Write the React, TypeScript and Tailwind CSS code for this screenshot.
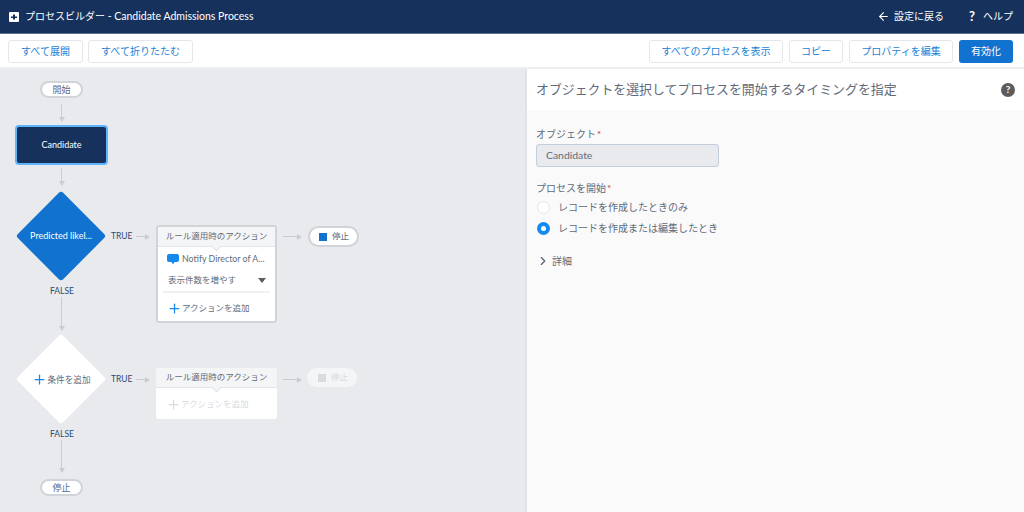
import { ArrowLeft, ChevronRight, Plus } from "lucide-react";

const font = "[font-family:Lato,'Noto_Sans_CJK_JP',sans-serif]";

function ArrowDown({ className }: { className: string }) {
  return (
    <div className={`absolute flex w-[9px] flex-col items-center ${className}`}>
      <div className="w-[1.5px] flex-1 bg-[#c9ccd1]" />
      <div className="h-0 w-0 border-x-[3.5px] border-t-[5px] border-x-transparent border-t-[#c9ccd1]" />
    </div>
  );
}

function ArrowRight({ className }: { className: string }) {
  return (
    <div className={`absolute flex h-[9px] items-center ${className}`}>
      <div className="h-[1.5px] flex-1 bg-[#c9ccd1]" />
      <div className="h-0 w-0 border-y-[3.5px] border-l-[5px] border-y-transparent border-l-[#c9ccd1]" />
    </div>
  );
}

function Pill({ label, className }: { label: string; className: string }) {
  return (
    <div className={`absolute flex h-[17px] w-[43px] items-center justify-center rounded-full border-2 border-[#d0d3d8] bg-white text-[9px] text-[#54698d] ${className}`}>
      {label}
    </div>
  );
}

function BranchLabel({ label, className }: { label: string; className: string }) {
  return <div className={`absolute text-[8.5px] leading-[12px] text-[#2a4a75] ${className}`}>{label}</div>;
}

function ToolbarButton({ label, width }: { label: string; width: string }) {
  return (
    <button className={`h-[23px] rounded-[3px] border border-[#e4e6e9] bg-white text-[10px] text-[#1b7fd6] ${width}`}>
      {label}
    </button>
  );
}

function CardHeader() {
  return (
    <div className="relative flex h-[20px] items-center justify-center whitespace-nowrap border-b border-[#e3e5e8] bg-[#f4f5f6] text-[8.5px] text-[#5f6b7a]">
      ルール適用時のアクション
      <div className="absolute -bottom-[4px] left-1/2 -ml-[3.5px] h-[7px] w-[7px] rotate-45 border-b border-r border-[#e3e5e8] bg-[#f4f5f6]" />
    </div>
  );
}

function Canvas() {
  return (
    <div className={`relative flex-1 bg-[#e8eaed] ${font}`}>
      <Pill label="開始" className="left-[40px] top-[12px]" />
      <ArrowDown className="left-[57px] top-[35px] h-[18px]" />

      <div className="absolute left-[15px] top-[56px] flex h-[40px] w-[93px] items-center justify-center rounded-[4px] border-2 border-[#5eb4ff] bg-[#16325c] text-[9px] text-white">
        <span>Candidate</span>
      </div>
      <ArrowDown className="left-[57px] top-[99px] h-[18px]" />

      {/* first decision */}
      <div className="absolute left-[29px] top-[135px] h-[64px] w-[64px] rotate-45 rounded-[3px] bg-[#1172d0]" />
      <div className="absolute left-[16px] top-[160px] w-[90px] text-center text-[9px] leading-[14px] text-white">Predicted likel...</div>
      <BranchLabel label="TRUE" className="left-[111px] top-[161px]" />
      <ArrowRight className="left-[136px] top-[163px] w-[14px]" />

      <div className="absolute left-[156px] top-[156px] h-[98px] w-[121px] rounded-[3px] border-2 border-[#d0d3d8] bg-white">
        <CardHeader />
        <div className="flex h-[22px] items-center pl-[9px] pt-[2px] text-[8.8px] text-[#5f6b7a]">
          <svg viewBox="0 0 12 12" className="mr-[3px] h-[12px] w-[12px] shrink-0">
            <path d="M2 1h8a2 2 0 0 1 2 2v4a2 2 0 0 1-2 2H7.5L6 11.5 4.5 9H2a2 2 0 0 1-2-2V3a2 2 0 0 1 2-2z" fill="#1589ee" />
          </svg>
          <span className="whitespace-nowrap">Notify Director of A...</span>
        </div>
        <div className="mx-[5px] flex h-[24px] items-center justify-between border-b-2 border-[#f0f1f2] pt-[1px] pl-[5px] pr-[4px] text-[8.5px] text-[#5f6b7a]">
          表示件数を増やす
          <div className="h-0 w-0 border-x-[4px] border-t-[5px] border-x-transparent border-t-[#5c5c5c]" />
        </div>
        <div className="flex h-[28px] items-center pl-[9px] pt-[3px] text-[8.5px] text-[#5f6b7a]">
          <Plus size={15} strokeWidth={2} className="text-[#1589ee]" />
          アクションを追加
        </div>
      </div>
      <ArrowRight className="left-[283px] top-[163px] w-[19px]" />
      <div className="absolute left-[308px] top-[157px] flex h-[21px] w-[51px] items-center rounded-full border-2 border-[#d0d3d8] bg-white pl-[9px] text-[8.5px] text-[#5f6b7a]">
        <div className="mr-[5px] h-[8px] w-[8px] bg-[#1172d0]" />
        停止
      </div>

      <BranchLabel label="FALSE" className="left-[50px] top-[216px]" />
      <ArrowDown className="left-[57px] top-[228px] h-[34px]" />

      {/* second decision */}
      <div className="absolute left-[29px] top-[278px] h-[64px] w-[64px] rotate-45 rounded-[3px] bg-white" />
      <div className="absolute left-[16px] top-[303px] flex w-[90px] items-center justify-center text-[8.6px] leading-[14px] text-[#5f6b7a]">
        <Plus size={15} strokeWidth={2} className="mr-[1px] text-[#1589ee]" />
        条件を追加
      </div>
      <BranchLabel label="TRUE" className="left-[111px] top-[304px]" />
      <ArrowRight className="left-[136px] top-[306px] w-[14px]" />

      <div className="absolute left-[156px] top-[299px] h-[51px] w-[121px] rounded-[3px] bg-white">
        <CardHeader />
        <div className="flex h-[31px] items-center pl-[10px] pt-[2px] text-[8.5px] text-[#d8dadd]">
          <Plus size={15} strokeWidth={2} />
          アクションを追加
        </div>
      </div>
      <ArrowRight className="left-[283px] top-[306px] w-[19px]" />
      <div className="absolute left-[307px] top-[299px] flex h-[19px] w-[50px] items-center rounded-full bg-[#f4f5f6] pl-[11px] text-[8.5px] text-[#d8dadd]">
        <div className="mr-[5px] h-[8px] w-[8px] bg-[#d8dadd]" />
        停止
      </div>

      <BranchLabel label="FALSE" className="left-[50px] top-[359px]" />
      <ArrowDown className="left-[57px] top-[371px] h-[33px]" />
      <Pill label="停止" className="left-[40px] top-[410px]" />
    </div>
  );
}

function SidePanel() {
  return (
    <div className={`flex w-[499px] shrink-0 flex-col border-l-[2px] border-[#e0e3e6] bg-[#fafafa] ${font}`}>
      <div className="flex h-[41px] items-center justify-between bg-white pl-[9px] pr-[9px] text-[12.9px] text-[#5f6b7a]">
        オブジェクトを選択してプロセスを開始するタイミングを指定
        <div className="flex h-[14px] w-[14px] items-center justify-center rounded-full bg-[#5c5c5c] text-[10px] font-bold text-white">?</div>
      </div>
      <div className="pl-[9px] pt-[17px] text-[10px] text-[#5f6b7a]">
        <div className="h-[14px] leading-[14px]">
          オブジェクト<span className="ml-[1px] text-[#c23934]">*</span>
        </div>
        <div className="mt-[3px] flex h-[23px] w-[183px] items-center rounded-[3px] border border-[#c3cfdd] bg-[#e8eaed] pl-[9px] text-[10.4px]">
          Candidate
        </div>
        <div className="mt-[14px] h-[14px] leading-[14px]">
          プロセスを開始<span className="ml-[1px] text-[#c23934]">*</span>
        </div>
        <div className="mt-[2px] flex h-[21px] items-center gap-[8px] pl-[1px]">
          <div className="h-[13px] w-[13px] rounded-full border border-[#e3e5e8] bg-white" />
          レコードを作成したときのみ
        </div>
        <div className="flex h-[21px] items-center gap-[8px] pl-[1px]">
          <div className="flex h-[13px] w-[13px] items-center justify-center rounded-full bg-[#1589ee]">
            <div className="h-[5px] w-[5px] rounded-full bg-white" />
          </div>
          レコードを作成または編集したとき
        </div>
        <div className="mt-[15px] flex h-[14px] items-center">
          <ChevronRight size={14} strokeWidth={2} className="mr-[2px] text-[#54606e]" />
          詳細
        </div>
      </div>
    </div>
  );
}

export default function App() {
  return (
    <div className={`flex h-[512px] w-[1024px] flex-col overflow-hidden ${font}`}>
      <div className="flex h-[34px] shrink-0 items-center justify-between border-b border-[#5a6f8f] bg-[#16325c] pl-[9px] pr-[11px] text-[10px] text-white">
        <div className="flex items-center">
          <svg viewBox="0 0 10 10" className="mr-[6px] h-[10px] w-[10px]">
            <path fillRule="evenodd" d="M1 0h8a1 1 0 0 1 1 1v8a1 1 0 0 1-1 1H1a1 1 0 0 1-1-1V1a1 1 0 0 1 1-1zm3 2.5v2h-2v1.4h2v1.6h2V5.9h2V4.5H6v-2z" fill="#fff" />
          </svg>
          プロセスビルダー<span className="text-[10.5px]">&nbsp;- Candidate Admissions Process</span>
        </div>
        <div className="flex items-center">
          <ArrowLeft size={13} strokeWidth={2} className="mr-[4px]" />
          設定に戻る
          <span className="ml-[25px] mr-[8px] text-[13px] font-bold">?</span>
          ヘルプ
        </div>
      </div>

      <div className="flex h-[35px] shrink-0 items-start justify-between border-b-2 border-[#eceef0] bg-white pl-[8px] pr-[11px] pt-[6px]">
        <div className="flex gap-[5px]">
          <ToolbarButton label="すべて展開" width="w-[75px]" />
          <ToolbarButton label="すべて折りたたむ" width="w-[105px]" />
        </div>
        <div className="flex gap-[6px]">
          <ToolbarButton label="すべてのプロセスを表示" width="w-[134px]" />
          <ToolbarButton label="コピー" width="w-[54px]" />
          <ToolbarButton label="プロパティを編集" width="w-[104px]" />
          <button className="h-[23px] w-[54px] rounded-[3px] bg-[#1172d0] text-[10px] text-white">有効化</button>
        </div>
      </div>

      <div className="flex min-h-0 flex-1">
        <Canvas />
        <SidePanel />
      </div>
    </div>
  );
}
